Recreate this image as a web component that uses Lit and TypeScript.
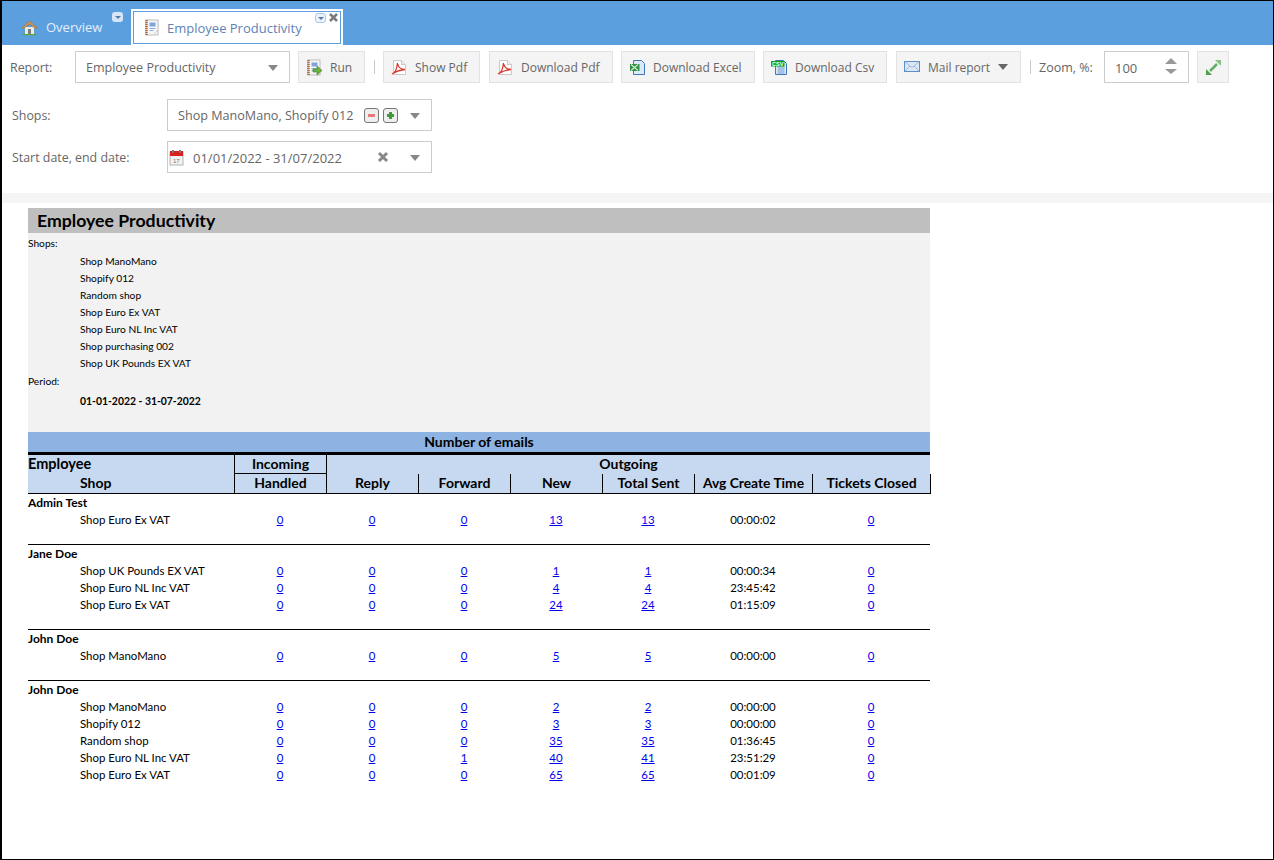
import { LitElement, html, css, svg } from "lit";
import { customElement } from "lit/decorators.js";

const pdf = svg`<path d="M2.500 1.500h8l4 4v10h-12z" fill="#fff" stroke="#c9c9c9"/><path d="M10.500 1.500v4h4" fill="#eee" stroke="#c9c9c9"/><path d="M1 15c3-1 5-5 5.500-11 .6 4 3 6.500 7.500 6.500-4 .2-8 1.500-13 4.500z" fill="none" stroke="#d8392e" stroke-width="1.300"/>`;
const book = (arrow: boolean) => svg`<rect x="2" y="1" width="12" height="15" fill="#f6f6f6" stroke="#bcbcbc"/><path d="M2.500 1v15" stroke="#b5683a" stroke-width="2.500" stroke-dasharray="1.200 .8"/><rect x="5.500" y="3.500" width="6" height="4" fill="#7fa6dc"/><path d="M5.500 9.500h6M5.500 11.500h4" stroke="#8fb0dd"/>${arrow ? svg`<path d="M7 10h4V7l5 4.500-5 4.500v-3H7z" fill="#6cb33f" stroke="#3d7d26" stroke-width=".6"/>` : svg`<path d="M10 15l4-4" stroke="#ccc"/>`}`;
const excel = svg`<path d="M4.500 1.500h8l3 3v11h-11z" fill="#dce9f8" stroke="#3f77b8"/><path d="M1 5h9.500v7H1z" fill="#2f8f46"/><path d="M2 5.500l7 6M9 5.500l-7 6" stroke="#cfe8c8" stroke-width="1.200"/>`;
const csv = svg`<path d="M4.500 1.500h8l3 3v11h-11z" fill="#dce9f8" stroke="#3f77b8"/><path d="M6.500 8h7M6.500 10h7M6.500 12h7M6.500 14h7" stroke="#6d9bd2"/><rect x="0" y="2" width="13.500" height="5.500" fill="#0fa80f"/><text x="1" y="6.600" font-size="5.500" font-weight="700" fill="#fff" font-family="Liberation Sans">CSV</text>`;
const mail = svg`<rect x=".5" y="2.500" width="15" height="10" fill="#dbe7f5" stroke="#5f8fc6"/><path d="M1 3l7 5.500L15 3M1 12l5-5M15 12l-5-5" fill="none" stroke="#9dbce0"/>`;
const expand = svg`<path d="M10 1h6v6z" fill="#86c286"/><path d="M1 10v6h6z" fill="#4e9e4e"/><path d="M5 12l7-7" stroke="#64ad64" stroke-width="2.500"/>`;
const home = svg`<path d="M1.500 15.500h14" stroke="#5aa83c" stroke-width="1.500"/><path d="M4 8h9v7H4z" fill="#f2ead8"/><path d="M7 10h3v5H7z" fill="#7d7d7d"/><path d="M.5 9L8.500 2l8 7-2 .5L8.500 5 2.500 9.500z" fill="#c9985c" stroke="#a06a30" stroke-width=".6"/>`;
const calendar = svg`<rect x="1" y="3" width="13" height="13" fill="#f2f2f2" stroke="#b4b4b4"/><rect x="1" y="2" width="13" height="5" fill="#d82020"/><rect x="3" y="1" width="2" height="3" fill="#777"/><rect x="10" y="1" width="2" height="3" fill="#777"/><text x="4" y="13.500" font-size="6" fill="#777" font-family="Liberation Sans">17</text>`;
const ic = (c: unknown, w = 16, h = 17) => html`<svg class="ic" width=${w} height=${h} viewBox="0 0 ${w} ${h}">${c}</svg>`;
const caret = html`<span class="caret"></span>`;

type Row = [string, number, number, number, number, number, string, number];
const groups: { name: string; rows: Row[] }[] = [
  { name: "Admin Test", rows: [["Shop Euro Ex VAT", 0, 0, 0, 13, 13, "00:00:02", 0]] },
  { name: "Jane Doe", rows: [
    ["Shop UK Pounds EX VAT", 0, 0, 0, 1, 1, "00:00:34", 0],
    ["Shop Euro NL Inc VAT", 0, 0, 0, 4, 4, "23:45:42", 0],
    ["Shop Euro Ex VAT", 0, 0, 0, 24, 24, "01:15:09", 0],
  ] },
  { name: "John Doe", rows: [["Shop ManoMano", 0, 0, 0, 5, 5, "00:00:00", 0]] },
  { name: "John Doe", rows: [
    ["Shop ManoMano", 0, 0, 0, 2, 2, "00:00:00", 0],
    ["Shopify 012", 0, 0, 0, 3, 3, "00:00:00", 0],
    ["Random shop", 0, 0, 0, 35, 35, "01:36:45", 0],
    ["Shop Euro NL Inc VAT", 0, 0, 1, 40, 41, "23:51:29", 0],
    ["Shop Euro Ex VAT", 0, 0, 0, 65, 65, "00:01:09", 0],
  ] },
];
const shops = ["Shop ManoMano", "Shopify 012", "Random shop", "Shop Euro Ex VAT", "Shop Euro NL Inc VAT", "Shop purchasing 002", "Shop UK Pounds EX VAT"];

@customElement("app-root")
export class AppRoot extends LitElement {
  static styles = css`
    :host { display: block; box-sizing: border-box; width: 1274px; height: 860px; border: 1px solid #000; border-left-width: 2px; overflow: hidden; background: #fff; font-family: "Open Sans", sans-serif; font-size: 12px; color: #555; }
    .ic { display: block; flex: none; }
    .tabs { display: flex; height: 44px; background: #5c9fdf; box-sizing: border-box; }
    .tab-home { width: 131px; position: relative; display: flex; align-items: center; padding: 8px 0 0 19px; box-sizing: border-box; gap: 7px; color: #e3effb; font-size: 13px; }
    .tab-active { margin: 10px 0 0 0; height: 33px; width: 208px; box-sizing: border-box; background: #fff; border: 1px solid #5c9fdf; outline: 2px solid #fff; position: relative; display: flex; align-items: center; padding: 0 0 0 10px; gap: 7px; color: #5f83b5; font-size: 13px; }
    .mini { position: absolute; display: block; width: 11px; height: 10px; border-radius: 3px; background: #d6e6f7; }
    .mini::after { content: ""; position: absolute; left: 2.500px; top: 3.500px; border: 3px solid transparent; border-top: 3px solid #5578a8; border-bottom: 0; }
    .m1 { left: 110px; top: 11px; }
    .m2 { right: 14px; top: 1px; background: #eaf3fb; border: 1px solid #a9c8ea; width: 9px; height: 8px; }
    .m2::after { left: 1.500px; top: 2.500px; }
    .x { position: absolute; right: 2px; top: 1px; }
    .toolbar { display: flex; align-items: center; height: 32px; margin-top: 6px; padding-left: 8px; }
    .tlabel { color: #666; font-size: 12.400px; width: 65px; }
    .select { box-sizing: border-box; height: 32px; border: 1px solid #ccc; background: #fff; display: flex; align-items: center; font-size: 12.500px; color: #666; position: relative; padding-top: 1px; }
    .report-select { width: 215px; padding-left: 10px; margin-right: 8px; }
    .caret { display: block; width: 0; height: 0; border: 5px solid transparent; border-top: 6px solid #888; border-bottom: 0; }
    .select > .caret { position: absolute; right: 11px; top: 13px; }
    .btn { box-sizing: border-box; height: 32px; background: #f4f4f4; border: 1px solid #e2e2e2; display: flex; align-items: center; gap: 8px; padding: 0 0 0 7px; color: #666; font-size: 12px; margin-right: 8px; }
    .btn.wide { margin-right: 9px; }
    .sep { width: 1px; height: 14px; background: #c8c8c8; margin: 0 8px 0 1px; }
    .zoomlabel { color: #666; font-size: 12.500px; width: 65px; }
    .zoom { width: 85px; margin-right: 8px; padding-left: 10px; font-size: 13px; }
    .spin { position: absolute; right: 11px; top: 6px; display: flex; flex-direction: column; gap: 5px; }
    .spin i { display: block; border: 6px solid transparent; }
    .spin .u { border-bottom: 6px solid #999; border-top: 0; }
    .spin .d { border-top: 5px solid #999; border-bottom: 0; }
    .filters { display: flex; flex-direction: column; gap: 10px; padding: 16px 0 0 10px; }
    .frow { display: flex; align-items: center; }
    .flabel { width: 155px; color: #666; font-size: 12.400px; padding-top: 1px; }
    .fsel { width: 265px; padding-left: 10px; font-size: 12.600px; }
    .pm { display: flex; gap: 4px; margin-left: 11px; }
    .pm b { box-sizing: border-box; display: block; width: 15px; height: 15px; border: 1px solid #777; border-radius: 3px; background: #eee; position: relative; }
    .pm b::before { content: ""; position: absolute; left: 3px; top: 5px; width: 7px; height: 3px; background: #e8797c; }
    .pm b.plus::before { left: 3px; background: #3f9a3a; }
    .pm b.plus::after { content: ""; position: absolute; left: 5px; top: 3px; width: 3px; height: 7px; background: #3f9a3a; }
    .date { padding-left: 1px; gap: 9px; font-size: 13px; }
    .clear { position: absolute; right: 42px; top: 9px; }
    .strip { height: 10px; background: #f5f5f5; margin-top: 20px; }
    .report { margin: 5px 0 0 26px; width: 902px; font-family: Lato, "Liberation Sans", sans-serif; font-size: 11px; color: #000; }
    .title { height: 25px; box-sizing: border-box; background: #bfbfbf; font-size: 17.700px; font-weight: 700; line-height: 26px; padding-left: 9px; color: #000; }
    .params { height: 199px; background: #f2f2f2; box-sizing: border-box; padding-top: 2px; font-size: 10.200px; }
    .params div { height: 17px; line-height: 17px; }
    .params .in { padding-left: 52px; }
    .params .top { height: 18px; line-height: 17px; }
    .params .gap { height: 19px; line-height: 19px; }
    .params .period { padding-left: 52px; font-weight: 700; font-size: 10.400px; height: 19px; line-height: 21px; }
    .band { height: 20px; line-height: 19px; background: #8db3e2; font-size: 14px; font-weight: 700; text-align: center; box-sizing: border-box; }
    table { border-collapse: separate; border-spacing: 0; table-layout: fixed; width: 902px; }
    col.c0 { width: 206px; } col.cn { width: 92px; } col.ct { width: 118px; }
    thead th { background: #c6d9f1; font-size: 14px; font-weight: 700; padding: 0; line-height: 17px; text-align: center; box-sizing: border-box; vertical-align: top; }
    thead tr.r1 th { border-top: 3px solid #000; height: 22px; }
    thead tr.r2 th { height: 20px; border-bottom: 1px solid #000; }
    th.bl { border-left: 1px solid #000; }
    th.br { box-shadow: 1px 0 0 #000; }
    th.bb { border-bottom: 1px solid #000; }
    th.left { text-align: left; font-size: 14.500px; }
    th.shop { text-align: left; padding-left: 52px; }
    th.avg { font-size: 13.800px; }
    tbody td { height: 17px; line-height: 17px; padding: 0; font-size: 11.450px; text-align: center; }
    tbody td.name { text-align: left; font-weight: 700; font-size: 12px; }
    tbody td.shop { text-align: left; padding-left: 52px; }
    tbody tr.end td { border-bottom: 1px solid #000; box-sizing: border-box; }
    a { color: #00e; text-decoration: underline; }
  `;

  render() {
    const link = (v: number) => html`<a href="#">${v}</a>`;
    return html`
      <div class="tabs">
        <div class="tab-home">${ic(home, 18, 17)}<span>Overview</span><span class="mini m1"></span></div>
        <div class="tab-active">${ic(book(false))}<span>Employee Productivity</span><span class="mini m2"></span>
          <svg class="x" width="9" height="9" viewBox="0 0 9 9"><path d="M1 1l7 7M8 1L1 8" stroke="#7a7a7a" stroke-width="2.500"/></svg></div>
      </div>
      <div class="toolbar">
        <span class="tlabel">Report:</span>
        <div class="select report-select">Employee Productivity${caret}</div>
        <div class="btn" style="width:67px">${ic(book(true))}<span>Run</span></div>
        <span class="sep"></span>
        <div class="btn wide" style="width:97px">${ic(pdf)}<span>Show Pdf</span></div>
        <div class="btn" style="width:124px">${ic(pdf)}<span>Download Pdf</span></div>
        <div class="btn" style="width:134px">${ic(excel)}<span>Download Excel</span></div>
        <div class="btn wide" style="width:124px">${ic(csv)}<span>Download Csv</span></div>
        <div class="btn" style="width:125px">${ic(mail)}<span>Mail report</span><span class="caret" style="border-top-color:#666"></span></div>
        <span class="sep"></span>
        <span class="zoomlabel">Zoom, %:</span>
        <div class="select zoom">100<span class="spin"><i class="u"></i><i class="d"></i></span></div>
        <div class="btn" style="width:32px">${ic(expand, 17, 17)}</div>
      </div>
      <div class="filters">
        <div class="frow"><span class="flabel">Shops:</span>
          <div class="select fsel">Shop ManoMano, Shopify 012<span class="pm"><b></b><b class="plus"></b></span>${caret}</div></div>
        <div class="frow"><span class="flabel">Start date, end date:</span>
          <div class="select fsel date">${ic(calendar, 15, 17)}<span>01/01/2022 - 31/07/2022</span>
            <svg class="clear" width="12" height="12" viewBox="0 0 12 12"><path d="M2 2l8 8M10 2l-8 8" stroke="#888" stroke-width="3"/></svg>${caret}</div></div>
      </div>
      <div class="strip"></div>
      <div class="report">
        <div class="title">Employee Productivity</div>
        <div class="params">
          <div class="top">Shops:</div>
          ${shops.map((s) => html`<div class="in">${s}</div>`)}
          <div class="gap">Period:</div>
          <div class="period">01-01-2022 - 31-07-2022</div>
        </div>
        <div class="band">Number of emails</div>
        <table>
          <colgroup><col class="c0"><col class="cn"><col class="cn"><col class="cn"><col class="cn"><col class="cn"><col class="ct"><col class="ct"></colgroup>
          <thead>
            <tr class="r1"><th class="left">Employee</th><th class="bl bb">Incoming</th><th class="bl" colspan="6">Outgoing</th></tr>
            <tr class="r2"><th class="shop">Shop</th><th class="bl">Handled</th><th class="bl">Reply</th><th class="bl">Forward</th><th class="bl">New</th><th class="bl">Total Sent</th><th class="bl avg">Avg Create Time</th><th class="bl br">Tickets Closed</th></tr>
          </thead>
          <tbody>
            ${groups.map((g, i) => html`
              <tr><td class="name" colspan="8">${g.name}</td></tr>
              ${g.rows.map((r) => html`<tr>
                <td class="shop">${r[0]}</td><td>${link(r[1])}</td><td>${link(r[2])}</td><td>${link(r[3])}</td><td>${link(r[4])}</td><td>${link(r[5])}</td><td>${r[6]}</td><td>${link(r[7])}</td>
              </tr>`)}
              ${i < groups.length - 1 ? html`<tr class="end"><td colspan="8"></td></tr>` : ""}
            `)}
          </tbody>
        </table>
      </div>
    `;
  }
}
